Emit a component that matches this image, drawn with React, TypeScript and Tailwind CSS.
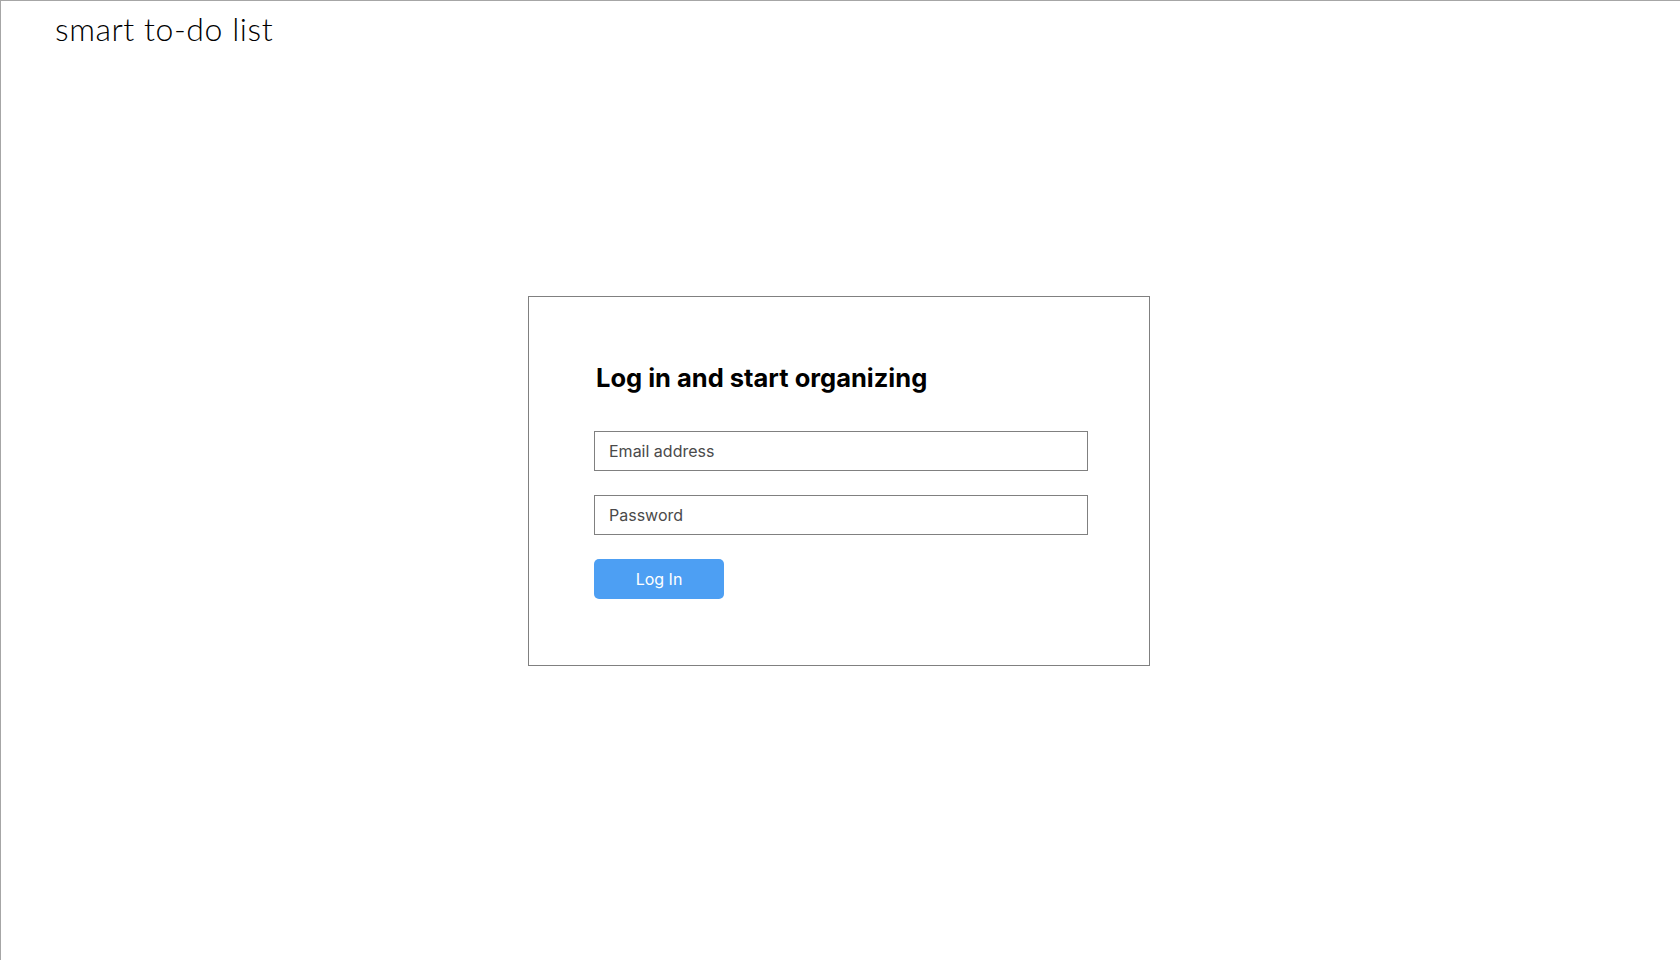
import React from "react";

const LoginCard = () => {
  return (
    <div className="w-[622px] border border-[#808080] bg-white pt-[65px] pb-[66px] pl-[65px] pr-[61px]">
      <h1 className="pl-[2px] text-[25.5px] leading-8 font-bold text-black">
        Log in and start organizing
      </h1>

      <form className="mt-[37px] flex flex-col" onSubmit={(e) => e.preventDefault()}>
        <input
          type="email"
          placeholder="Email address"
          className="h-10 w-[494px] border border-[#808080] px-[14px] text-[16px] text-[#333] placeholder:text-[#4a4a4a] outline-none"
        />
        <input
          type="password"
          placeholder="Password"
          className="mt-6 h-10 w-[494px] border border-[#808080] px-[14px] text-[16px] text-[#333] placeholder:text-[#4a4a4a] outline-none"
        />
        <button
          type="submit"
          className="mt-6 h-10 w-[130px] rounded-[5px] bg-[#4d9ff3] text-[16px] text-white"
        >
          Log In
        </button>
      </form>
    </div>
  );
};

const App = () => {
  return (
    <div
      className="flex h-screen flex-col border-t border-l border-[#a6a6a6] bg-white"
      style={{ fontFamily: "Inter, 'Liberation Sans', sans-serif" }}
    >
      <header className="h-[58px] shrink-0 pl-[54px] pt-[10px]">
        <p className="text-[32px] leading-9 font-light tracking-[0.55px] text-black" style={{ fontFamily: "Lato, Inter, sans-serif" }}>
          smart to-do list
        </p>
      </header>

      <main className="flex flex-1 items-center justify-center pr-[3px] pb-[58px]">
        <LoginCard />
      </main>
    </div>
  );
};

export default App;
